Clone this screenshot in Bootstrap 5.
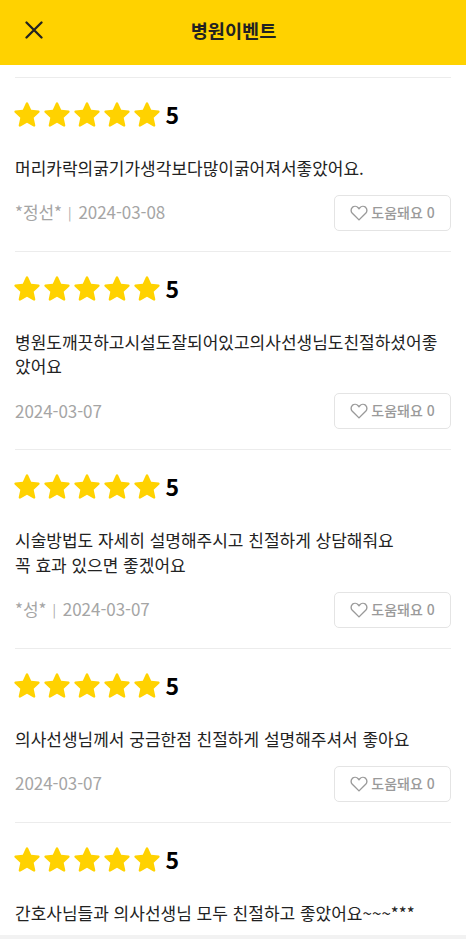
<!doctype html>
<html lang="ko">
<head>
<meta charset="utf-8">
<title>병원이벤트</title>
<link href="https://cdn.jsdelivr.net/npm/bootstrap@5.3.0/dist/css/bootstrap.min.css" rel="stylesheet">
<style>
html,body{height:939px;overflow:hidden;background:#fff}
body{font-family:"Noto Sans CJK KR","Noto Sans",sans-serif;color:#222}
.top-bar{height:65px;background:#ffd200;padding:0 23px 5px 25px}
.top-title{font-size:18.6px;font-weight:700;color:#222;line-height:1;margin-right:1px}
.close-ico{width:18px;height:18px}
.top-side{width:18px}
.feed{padding:11.9px 15px 0}
.entry{border-top:1px solid #ececec;padding:23px 0 20px}
.rate-row{height:26px;margin-bottom:29px}
.star-ico{width:26px;height:26px;margin-left:-1px;margin-right:5.1px;display:block}
.rate-num{font-size:23px;font-weight:700;color:#000;line-height:26px}
.entry-text{font-size:17px;line-height:24.5px;color:#222;margin:0 0 14.5px}
.entry-meta{height:36px}
.meta-text{font-size:17px;color:#a5a5a5;line-height:1;letter-spacing:-.05px;padding-bottom:2px}
.meta-sep{font-size:13px;margin:0 7px 0 6px;position:relative;top:-1px}
.help-btn{width:117px;height:36px;padding:0 0 2px;border:1px solid #e4e4e4;border-radius:5px;background:#fff;color:#9a9a9a;font-size:14px;font-weight:500;line-height:1}
.help-btn svg{width:18px;height:16px;margin:2px 3px 0 0}
.foot-strip{height:4px;background:#f2f2f2;position:fixed;left:0;right:0;bottom:0}
</style>
</head>
<body>
<header class="top-bar d-flex align-items-center justify-content-between">
  <svg class="close-ico" viewBox="0 0 18 18" aria-label="닫기"><path d="M1.500 1.500 16.500 16.500M16.500 1.500 1.500 16.500" stroke="#222" stroke-width="2.300" fill="none" stroke-linecap="round"/></svg>
  <div class="top-title">병원이벤트</div>
  <div class="top-side"></div>
</header>
<svg width="0" height="0" class="d-block"><defs><path id="star" d="M13 1.200c.5 0 .9.3 1.100.7l3.100 6.900 7.400.8c1 .1 1.400 1.400.7 2l-5.600 5.100 1.600 7.500c.2 1-.9 1.800-1.800 1.300L13 21.700l-6.500 3.800c-.9.5-2-.3-1.800-1.300l1.600-7.500-5.600-5.100c-.7-.6-.3-1.900.7-2l7.400-.8 3.100-6.900c.2-.4.6-.7 1.100-.7Z" fill="#ffd200"/><path id="heart" d="M8.500 14 2.200 7.800C.6 6.100.7 3.600 2.200 2.200 3.800.8 6.300 1 7.700 2.500L8.500 3.400 9.300 2.500C10.700 1 13.200.8 14.800 2.200 16.300 3.600 16.400 6.100 14.800 7.800Z" fill="none" stroke="#9a9a9a" stroke-width="1.300"/></defs></svg>
<main class="feed">
  <article class="entry">
    <div class="rate-row d-flex align-items-center"><svg class="star-ico" viewBox="0 0 26 26"><use href="#star"/></svg><svg class="star-ico" viewBox="0 0 26 26"><use href="#star"/></svg><svg class="star-ico" viewBox="0 0 26 26"><use href="#star"/></svg><svg class="star-ico" viewBox="0 0 26 26"><use href="#star"/></svg><svg class="star-ico" viewBox="0 0 26 26"><use href="#star"/></svg><span class="rate-num">5</span></div>
    <p class="entry-text">머리카락의굵기가생각보다많이굵어져서좋았어요.</p>
    <div class="entry-meta d-flex align-items-center justify-content-between"><span class="meta-text">*정선*<span class="meta-sep">|</span>2024-03-08</span><button class="help-btn btn d-flex align-items-center justify-content-center"><svg viewBox="0 0 17 15"><use href="#heart"/></svg>도움돼요 0</button></div>
  </article>
  <article class="entry">
    <div class="rate-row d-flex align-items-center"><svg class="star-ico" viewBox="0 0 26 26"><use href="#star"/></svg><svg class="star-ico" viewBox="0 0 26 26"><use href="#star"/></svg><svg class="star-ico" viewBox="0 0 26 26"><use href="#star"/></svg><svg class="star-ico" viewBox="0 0 26 26"><use href="#star"/></svg><svg class="star-ico" viewBox="0 0 26 26"><use href="#star"/></svg><span class="rate-num">5</span></div>
    <p class="entry-text">병원도깨끗하고시설도잘되어있고의사선생님도친절하셨어좋<br>았어요</p>
    <div class="entry-meta d-flex align-items-center justify-content-between"><span class="meta-text">2024-03-07</span><button class="help-btn btn d-flex align-items-center justify-content-center"><svg viewBox="0 0 17 15"><use href="#heart"/></svg>도움돼요 0</button></div>
  </article>
  <article class="entry">
    <div class="rate-row d-flex align-items-center"><svg class="star-ico" viewBox="0 0 26 26"><use href="#star"/></svg><svg class="star-ico" viewBox="0 0 26 26"><use href="#star"/></svg><svg class="star-ico" viewBox="0 0 26 26"><use href="#star"/></svg><svg class="star-ico" viewBox="0 0 26 26"><use href="#star"/></svg><svg class="star-ico" viewBox="0 0 26 26"><use href="#star"/></svg><span class="rate-num">5</span></div>
    <p class="entry-text">시술방법도 자세히 설명해주시고 친절하게 상담해줘요<br>꼭 효과 있으면 좋겠어요</p>
    <div class="entry-meta d-flex align-items-center justify-content-between"><span class="meta-text">*성*<span class="meta-sep">|</span>2024-03-07</span><button class="help-btn btn d-flex align-items-center justify-content-center"><svg viewBox="0 0 17 15"><use href="#heart"/></svg>도움돼요 0</button></div>
  </article>
  <article class="entry">
    <div class="rate-row d-flex align-items-center"><svg class="star-ico" viewBox="0 0 26 26"><use href="#star"/></svg><svg class="star-ico" viewBox="0 0 26 26"><use href="#star"/></svg><svg class="star-ico" viewBox="0 0 26 26"><use href="#star"/></svg><svg class="star-ico" viewBox="0 0 26 26"><use href="#star"/></svg><svg class="star-ico" viewBox="0 0 26 26"><use href="#star"/></svg><span class="rate-num">5</span></div>
    <p class="entry-text">의사선생님께서 궁금한점 친절하게 설명해주셔서 좋아요</p>
    <div class="entry-meta d-flex align-items-center justify-content-between"><span class="meta-text">2024-03-07</span><button class="help-btn btn d-flex align-items-center justify-content-center"><svg viewBox="0 0 17 15"><use href="#heart"/></svg>도움돼요 0</button></div>
  </article>
  <article class="entry">
    <div class="rate-row d-flex align-items-center"><svg class="star-ico" viewBox="0 0 26 26"><use href="#star"/></svg><svg class="star-ico" viewBox="0 0 26 26"><use href="#star"/></svg><svg class="star-ico" viewBox="0 0 26 26"><use href="#star"/></svg><svg class="star-ico" viewBox="0 0 26 26"><use href="#star"/></svg><svg class="star-ico" viewBox="0 0 26 26"><use href="#star"/></svg><span class="rate-num">5</span></div>
    <p class="entry-text">간호사님들과 의사선생님 모두 친절하고 좋았어요~~~***</p>
  </article>
</main>
<div class="foot-strip"></div>
<script src="https://cdn.jsdelivr.net/npm/bootstrap@5.3.0/dist/js/bootstrap.bundle.min.js"></script>
</body>
</html>
